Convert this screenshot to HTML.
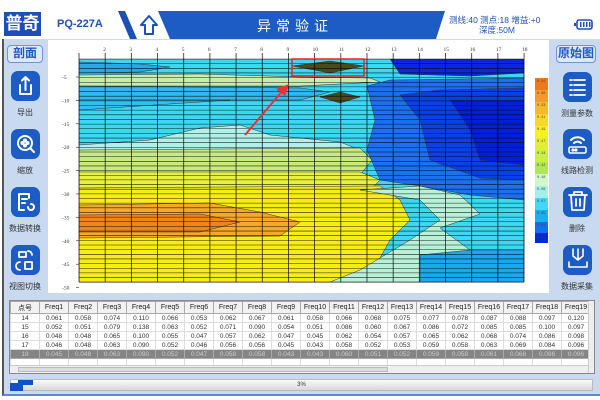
<!DOCTYPE html>
<html><head><meta charset="utf-8"><style>
*{margin:0;padding:0;box-sizing:border-box}
body{width:600px;height:400px;background:#fff;position:relative;overflow:hidden;font-family:"Liberation Sans","Noto Sans CJK SC",sans-serif}
.a{position:absolute}
.btn{position:absolute;background:#1d5cc4;border-radius:7px}
.lbl{position:absolute;font-size:8px;color:#333;text-align:center;width:50px}
.tb{position:absolute;border:1.5px solid #6a98d4;border-radius:4px;background:#dde8f8;color:#1d5cc4;font-size:12px;font-weight:bold;text-align:center;line-height:14px}
table{border-collapse:collapse;font-size:6.5px;color:#333;table-layout:fixed}
td{border:1px solid #ddd;height:9px;text-align:center;padding:0;white-space:nowrap;overflow:hidden}
tr.h td{background:#f2f2f2;border:1px solid #aaa;height:12px;font-size:7px;color:#222}
tr.s td{background:#858585;color:#ccc;border-color:#aaa}
</style></head><body>
<div class="a" style="left:0;top:11px;width:600px;height:28px;background:#fff"></div>
<div class="a" style="left:4px;top:12px;width:37px;height:24px;background:#1d4fb8;color:#fff;font-size:17px;font-weight:bold;line-height:24px;text-align:center">普奇</div>
<div class="a" style="left:57px;top:18px;font-size:11px;color:#1d4fb8;font-weight:bold">PQ-227A</div>
<svg class="a" style="left:0;top:0" width="600" height="40">
<polygon points="118,11 125,11 137,39 130,39" fill="#1d4fb8"/>
<polygon points="158,11 445,11 436,39 170,39" fill="#1d5cc4"/>
<path d="M141,25 L149,16 L157,25 L153,25 L153,34 L145,34 L145,25 Z" fill="none" stroke="#1d4fb8" stroke-width="2" stroke-linejoin="round"/>
<rect x="577" y="20" width="15" height="9" rx="2" fill="none" stroke="#1d4fb8" stroke-width="1.6"/>
<rect x="574" y="23" width="2" height="3" fill="#1d4fb8"/>
<g fill="#1d4fb8"><rect x="580" y="22" width="1.5" height="5"/><rect x="583" y="22" width="1.5" height="5"/><rect x="586" y="22" width="1.5" height="5"/><rect x="589" y="22" width="1.5" height="5"/></g>
</svg>
<div class="a" style="left:240px;top:16px;width:110px;text-align:center;color:#fff;font-size:14px;letter-spacing:5px">异常验证</div>
<div class="a" style="left:449px;top:15px;font-size:8.5px;color:#1d4fb8;line-height:10px;white-space:nowrap">测线:40 测点:18 增益:+0<br><span style="padding-left:30px">深度:50M</span></div>
<div class="a" style="left:2px;top:39px;width:598px;height:357px;background:#c9d9ef;border-left:2px solid #555;border-bottom:2px solid #5b8ad0"></div>
<div class="a" style="left:48px;top:40px;width:501px;height:253px;background:#fff"></div>
<div class="tb" style="left:7px;top:45px;width:36px;height:18px">剖面</div>
<div class="tb" style="left:556px;top:45px;width:40px;height:18px">原始图</div>
<div class="btn" style="left:11px;top:71px;width:29px;height:30px"></div>
<div class="btn" style="left:11px;top:129px;width:29px;height:30px"></div>
<div class="btn" style="left:11px;top:187px;width:29px;height:30px"></div>
<div class="btn" style="left:11px;top:245px;width:29px;height:30px"></div>
<div class="btn" style="left:563px;top:72px;width:29px;height:30px"></div>
<div class="btn" style="left:563px;top:129px;width:29px;height:30px"></div>
<div class="btn" style="left:563px;top:187px;width:29px;height:30px"></div>
<div class="btn" style="left:563px;top:245px;width:29px;height:30px"></div>
<svg class="a" style="left:0;top:0" width="600" height="300" fill="none" stroke="#fff" stroke-width="2" stroke-linecap="round" stroke-linejoin="round">
<path d="M20,85 V94 H31 V85 M25.5,90 V77 M22,80.5 L25.5,77 L29,80.5"/>
<circle cx="25" cy="143" r="7"/><path d="M30,148 L34,152"/><circle cx="25" cy="140.5" r="1" fill="#fff"/><circle cx="25" cy="145.5" r="1" fill="#fff"/><circle cx="22.5" cy="143" r="1" fill="#fff"/><circle cx="27.5" cy="143" r="1" fill="#fff"/>
<path d="M29,198 V194 H19 V210 H24 M22,199 H27 M22,203 H25"/><path d="M31,204 a3,3 0 1 1 -3,3"/>
<path d="M19,257 V252 H26 V257 Z M28,251 a4,4 0 0 1 4,4 M20,262 a4,4 0 0 0 0,8 M25,262 H32 V269 H25 Z" stroke-width="1.8"/>
<path d="M570,80 h2 M574,80 h11 M570,85 h2 M574,85 h11 M570,90 h2 M574,90 h11 M570,95 h2 M574,95 h11" stroke-width="1.8"/>
<path d="M571,140 a9,9 0 0 1 13,0 M574,143 a5,5 0 0 1 7,0"/><rect x="569" y="147" width="17" height="6" rx="1.5" stroke-width="1.6"/><circle cx="573" cy="150" r=".6" fill="#fff"/><circle cx="576" cy="150" r=".6" fill="#fff"/>
<path d="M569,195 H587 M574,195 V192 H582 V195 M571,195 L572,210 H584 L585,195 M576,199 V206 M580,199 V206" stroke-width="1.8"/>
<path d="M569,262 V267 H587 V262 M573,249 V256 L578,260 L583,256 V249 M578,249 V260" stroke-width="1.6"/>
</svg>
<div class="lbl" style="left:0;top:107px">导出</div>
<div class="lbl" style="left:0;top:165px">缩放</div>
<div class="lbl" style="left:0;top:223px">数据转换</div>
<div class="lbl" style="left:0;top:281px">视图切换</div>
<div class="lbl" style="left:552px;top:108px">测量参数</div>
<div class="lbl" style="left:552px;top:165px">线路检测</div>
<div class="lbl" style="left:552px;top:223px">删除</div>
<div class="lbl" style="left:552px;top:281px">数据采集</div>
<svg class="a" style="left:0;top:0" width="600" height="300">
<defs><clipPath id="c"><rect x="79" y="59" width="445" height="223"/></clipPath></defs>
<g clip-path="url(#c)" stroke="#333" stroke-width="0.5">
<rect x="79" y="59" width="445" height="223" fill="#3cd8f2"/>
<polygon points="79,62 140,64 170,67 140,72 79,73" fill="#28a8e8"/>
<polygon points="79,75 200,74 300,77 370,78 380,82 300,86 79,86" fill="#c8ecb0"/>
<polygon points="79,86 300,88 330,92 300,100 79,100" fill="#30b8f0"/>
<polygon points="79,100 230,100 79,110" fill="#30c0f0"/>
<polygon points="150,140 200,128 240,125 270,135 340,142 360,150 79,152 79,145" fill="#b0f0e8"/>
<polygon points="79,150 360,148 372,160 360,175 79,175" fill="#c8ea80"/>
<polygon points="79,172 360,172 380,180 370,190 79,190" fill="#e8f040"/>
<polygon points="79,188 380,186 400,200 410,220 390,240 380,258 360,282 79,282" fill="#f8ec18"/>
<polygon points="79,205 210,203 260,212 300,222 280,236 79,238" fill="#f8a828"/>
<polygon points="79,215 200,214 240,222 200,232 79,232" fill="#f08418"/>
<polygon points="360,190 420,200 440,220 410,240 380,258 360,270 330,282 420,282 430,262 470,250 440,228 480,214 460,195 420,186" fill="#b8f0d8"/>
<polygon points="367,86 390,80 524,78 524,200 470,195 420,186 380,180 367,150 375,120" fill="#1a70f0"/>
<polygon points="390,59 524,59 524,73 470,76 400,74" fill="#0828e0"/>
<polygon points="400,95 440,90 524,88 524,180 480,178 430,160 420,120" fill="#0a40e8"/>
<polygon points="450,100 524,100 524,165 480,160 470,130" fill="#0020d8"/>
<polygon points="420,255 470,250 524,250 524,282 420,282" fill="#18a8ee"/>
<polygon points="292,66 330,61 364,66 330,73" fill="#4a4a20"/>
<polygon points="320,97 340,92 360,97 340,103" fill="#4a4a20"/>
</g>
<g stroke="#000" stroke-width="0.55" opacity="0.85" id="hl"></g>
<rect x="292" y="59" width="72" height="17" fill="none" stroke="#f02020" stroke-width="1.5"/>
<path d="M245,135 L284,89" stroke="#f03030" stroke-width="2"/><polygon points="289,84 276,89 285,96" fill="#f03030"/>
<g stroke="none">
<rect x="535" y="78" width="13" height="12" fill="#f07818"/><rect x="535" y="90" width="13" height="12" fill="#f89828"/><rect x="535" y="102" width="13" height="12" fill="#f8b828"/><rect x="535" y="114" width="13" height="12" fill="#f8d828"/><rect x="535" y="126" width="13" height="12" fill="#f8f020"/><rect x="535" y="138" width="13" height="12" fill="#e0f030"/><rect x="535" y="150" width="13" height="12" fill="#c8f040"/><rect x="535" y="162" width="13" height="12" fill="#b0e850"/><rect x="535" y="174" width="13" height="12" fill="#d0f8c8"/><rect x="535" y="186" width="13" height="12" fill="#a0f0f0"/><rect x="535" y="198" width="13" height="12" fill="#40d8f8"/><rect x="535" y="210" width="13" height="12" fill="#18b0f0"/><rect x="535" y="222" width="13" height="11" fill="#1070f0"/><rect x="535" y="233" width="13" height="10" fill="#0028e0"/>
</g>
<g font-size="3.5" fill="#444" font-family="Liberation Mono,monospace"><text x="537" y="82">0.31</text><text x="537" y="94">0.30</text><text x="537" y="106">0.23</text><text x="537" y="118">0.21</text><text x="537" y="130">0.19</text><text x="537" y="142">0.17</text><text x="537" y="154">0.14</text><text x="537" y="166">0.12</text><text x="537" y="178">0.10</text><text x="537" y="190">0.08</text><text x="537" y="202">0.07</text><text x="537" y="214">0.05</text><text x="537" y="226">0.03</text><text x="537" y="238">0.01</text></g>
<g id="ax" font-size="5.5" fill="#333" font-family="Liberation Serif,serif"></g>
</svg>
<script>
(function(){var ns="http://www.w3.org/2000/svg",hl=document.getElementById("hl"),ax=document.getElementById("ax");
function L(x1,y1,x2,y2,w){var l=document.createElementNS(ns,"line");l.setAttribute("x1",x1);l.setAttribute("y1",y1);l.setAttribute("x2",x2);l.setAttribute("y2",y2);if(w)l.setAttribute("stroke-width",w);hl.appendChild(l);}
for(var i=0;i<=48;i++){var y=59+i*4.65;L(79,y,524,y);}
for(var n=1;n<=18;n++){var x=79+(n-1)*26.18;L(x,53,x,282,0.8);if(n>1){var t=document.createElementNS(ns,"text");t.setAttribute("x",x-2);t.setAttribute("y",51);t.textContent=n;ax.appendChild(t);}}
for(var k=1;k<=10;k++){var y=77+(k-1)*23.4;L(76,y,79,y,0.6);var t=document.createElementNS(ns,"text");t.setAttribute("x",62);t.setAttribute("y",y+2);t.textContent="-"+(k*5);ax.appendChild(t);}
})();
</script>
<div class="a" style="left:9px;top:300px;width:586px;height:74px;background:#fff;border:1px solid #888;overflow:hidden">
<table style="width:609px">
<colgroup><col style="width:29px"><col span="20" style="width:29px"></colgroup>
<tr class="h"><td>点号</td><td>Freq1</td><td>Freq2</td><td>Freq3</td><td>Freq4</td><td>Freq5</td><td>Freq6</td><td>Freq7</td><td>Freq8</td><td>Freq9</td><td>Freq10</td><td>Freq11</td><td>Freq12</td><td>Freq13</td><td>Freq14</td><td>Freq15</td><td>Freq16</td><td>Freq17</td><td>Freq18</td><td>Freq19</td></tr>
<tr><td>14</td><td>0.061</td><td>0.058</td><td>0.074</td><td>0.110</td><td>0.066</td><td>0.053</td><td>0.062</td><td>0.067</td><td>0.061</td><td>0.058</td><td>0.066</td><td>0.068</td><td>0.075</td><td>0.077</td><td>0.078</td><td>0.087</td><td>0.088</td><td>0.097</td><td>0.120</td></tr>
<tr><td>15</td><td>0.052</td><td>0.051</td><td>0.079</td><td>0.138</td><td>0.063</td><td>0.052</td><td>0.071</td><td>0.090</td><td>0.054</td><td>0.051</td><td>0.086</td><td>0.060</td><td>0.067</td><td>0.086</td><td>0.072</td><td>0.085</td><td>0.085</td><td>0.100</td><td>0.097</td></tr>
<tr><td>16</td><td>0.048</td><td>0.048</td><td>0.065</td><td>0.100</td><td>0.055</td><td>0.047</td><td>0.057</td><td>0.062</td><td>0.047</td><td>0.045</td><td>0.062</td><td>0.054</td><td>0.057</td><td>0.065</td><td>0.062</td><td>0.068</td><td>0.074</td><td>0.086</td><td>0.098</td></tr>
<tr><td>17</td><td>0.046</td><td>0.048</td><td>0.063</td><td>0.090</td><td>0.052</td><td>0.046</td><td>0.056</td><td>0.056</td><td>0.045</td><td>0.043</td><td>0.058</td><td>0.052</td><td>0.053</td><td>0.059</td><td>0.058</td><td>0.063</td><td>0.069</td><td>0.084</td><td>0.096</td></tr>
<tr class="s"><td>18</td><td>0.045</td><td>0.048</td><td>0.063</td><td>0.090</td><td>0.052</td><td>0.047</td><td>0.058</td><td>0.058</td><td>0.043</td><td>0.043</td><td>0.060</td><td>0.051</td><td>0.052</td><td>0.059</td><td>0.058</td><td>0.061</td><td>0.068</td><td>0.086</td><td>0.096</td></tr>
<tr><td></td><td></td><td></td><td></td><td></td><td></td><td></td><td></td><td></td><td></td><td></td><td></td><td></td><td></td><td></td><td></td><td></td><td></td><td></td><td></td></tr>
</table>
<div class="a" style="left:0;top:64px;width:578px;height:8px;background:#eee;border-top:1px solid #ccc"><div class="a" style="left:8px;top:1px;width:370px;height:5px;background:#dcdcdc;border:1px solid #bbb"></div></div>
<div class="a" style="left:578px;top:0;width:7px;height:72px;background:#eee;border-left:1px solid #ccc"></div>
</div>
<div class="a" style="left:10px;top:379px;width:583px;height:12px;background:linear-gradient(#fafafa,#d8d8d8);border:1px solid #bbb;font-size:6px;color:#333;text-align:center;line-height:11px">3%</div>
<div class="a" style="left:10px;top:383px;width:8px;height:8px;background:#1050c8"></div>
<div class="a" style="left:18px;top:380px;width:15px;height:5px;background:#1050c8"></div>
<div class="a" style="left:18px;top:385px;width:5px;height:6px;background:#1050c8"></div>
</body></html>
